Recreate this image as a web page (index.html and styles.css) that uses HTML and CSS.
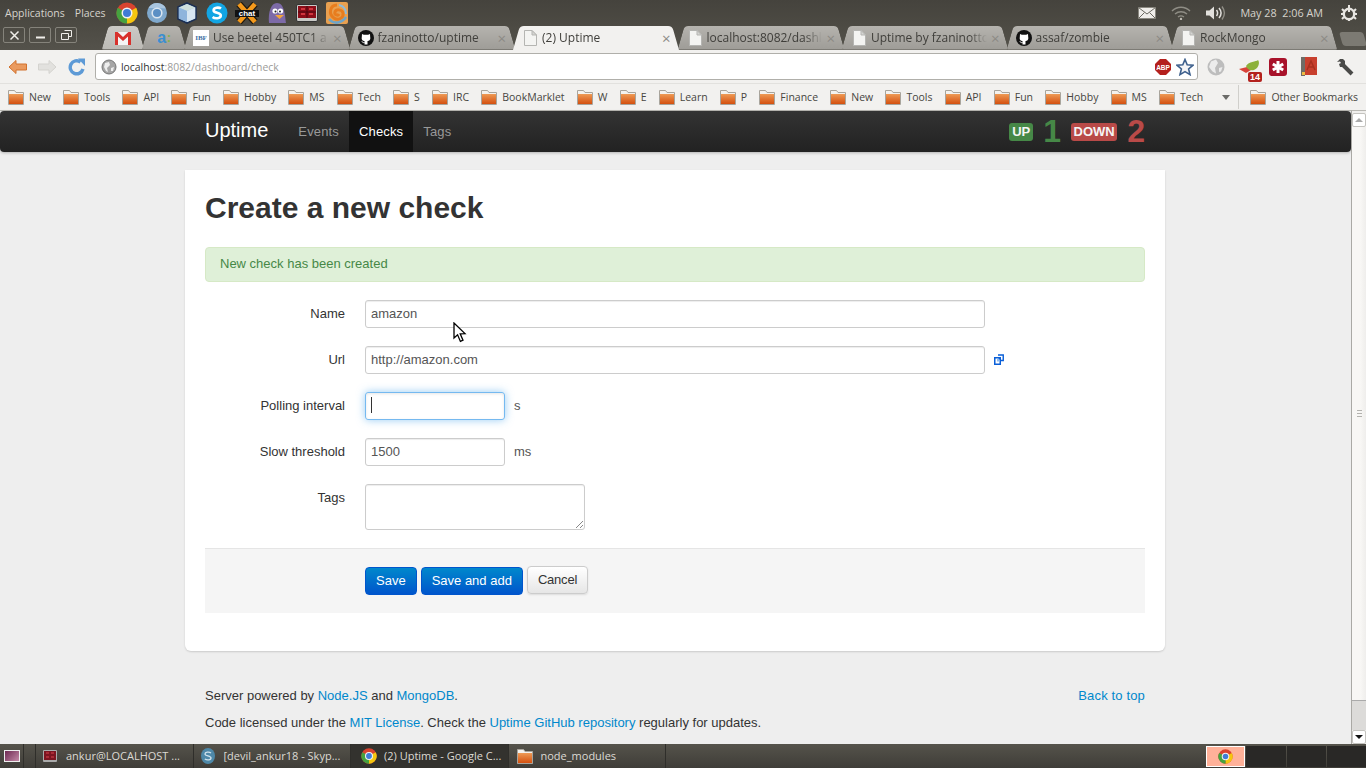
FILE: index.html
```html
<!DOCTYPE html>
<html lang="en">
<head>
    <meta charset="UTF-8">
    <title>(2) Uptime</title>
    <link rel="stylesheet" href="styles.css">
</head>
<body>

    <svg class="defs" width="0" height="0">
        <linearGradient id="folder-fill" x1="0" y1="0" x2="0" y2="1">
            <stop offset="0" stop-color="#ee9a55"/>
            <stop offset="1" stop-color="#d4500f"/>
        </linearGradient>
        <symbol id="chrome" viewBox="0 0 24 24">
            <circle cx="12" cy="12" r="11.5" fill="#d9432f"/>
            <path d="M12 12 L22 6.25 A11.5 11.5 0 0 1 12 23.5 Z" fill="#f4c60f"/>
            <path d="M12 12 L12 23.5 A11.5 11.5 0 0 1 2 6.25 Z" fill="#45a23f"/>
            <circle cx="12" cy="12" r="6" fill="#f2f2f2"/>
            <circle cx="12" cy="12" r="4.4" fill="#3f7cd6"/>
        </symbol>
        <symbol id="folder" viewBox="0 0 16 16">
            <path d="M.5 4 V1.5 H6.5 L8 3.5 H15.5 V15.5 H.5 Z" fill="#f4f2ee" stroke="#a8a49c"/>
            <rect x="1" y="5" width="14" height="10" fill="url(#folder-fill)"/>
        </symbol>
        <symbol id="doc" viewBox="0 0 16 16">
            <path d="M2.5 .5 H10 L14.5 5 V15.5 H2.5 Z" fill="#f4f4f2" stroke="#b5b5b2"/>
            <path d="M10 .5 V5 H14.5 Z" fill="#d5d5d2" stroke="#b5b5b2"/>
        </symbol>
        <symbol id="octocat" viewBox="0 0 16 16">
            <circle cx="8" cy="8" r="8" fill="#111"/>
            <path d="M4 4 L5.8 4.8 H10.2 L12 4 L12.2 7 C12.8 10 11 11 9.5 11 V14.5 H6.5 V11 C5 11 3.2 10 3.8 7 Z" fill="#fff"/>
            <path d="M6.5 12.5 C5 13 4.4 12 3.8 11.4" stroke="#fff" fill="none"/>
        </symbol>
    </svg>

    <div class="panel">
        <span class="panel-menu">Applications</span>
        <span class="panel-menu">Places</span>
        <div class="launchers">
            <svg class="launcher" width="22" height="22"><use href="#chrome"/></svg>
            <svg class="launcher" width="22" height="22" viewBox="0 0 22 22">
                <circle cx="11" cy="11" r="10" fill="#7fa8cc"/>
                <path d="M2.5 6 A10 10 0 0 1 20 6.5 L11 6 Z" fill="#a9c5de"/>
                <circle cx="11" cy="11" r="5.6" fill="#dbe6f0"/>
                <circle cx="11" cy="11" r="4" fill="#5b8fc4"/>
            </svg>
            <svg class="launcher" width="22" height="22" viewBox="0 0 22 22">
                <path d="M11 1 L20 5 V17 L11 21 L2 17 V5 Z" fill="#9cc3e6" stroke="#1c2f52" stroke-width="1.6"/>
                <path d="M2.8 5.4 L11 9 L19.2 5.4 L11 1.9 Z" fill="#cfe0dc"/>
                <path d="M11 9 V20 L19.2 16.4 V5.4 Z" fill="#d8e6f2"/>
                <path d="M2.8 5.4 L11 9 V20 L2.8 16.4 Z" fill="#8fb4dc"/>
            </svg>
            <svg class="launcher" width="22" height="22" viewBox="0 0 22 22">
                <circle cx="11" cy="11" r="10.5" fill="#12a5e3"/>
                <path d="M15 6.6 C13 5 7.5 5.2 7.6 8.4 C7.7 11.6 15 10 14.8 13.6 C14.6 16.6 9 17 6.6 15" fill="none" stroke="#fff" stroke-width="2.6"/>
            </svg>
            <svg class="launcher launcher-chat" width="24" height="22" viewBox="0 0 24 22">
                <path d="M4 2 L20 20 M20 2 L4 20" stroke="#201a10" stroke-width="7"/>
                <path d="M4 2 L20 20 M20 2 L4 20" stroke="#f59a1c" stroke-width="4.6"/>
                <rect x="0" y="8" width="24" height="7" fill="#111"/>
                <text x="12" y="14" class="chat-word">chat</text>
            </svg>
            <svg class="launcher" width="22" height="22" viewBox="0 0 22 22">
                <path d="M3 21 C2 10 5 1 11 1 C18 1 19 12 20 21 Z" fill="#7d6aa8"/>
                <circle cx="9" cy="9" r="2.6" fill="#fff"/>
                <circle cx="14.5" cy="9" r="2.6" fill="#fff"/>
                <circle cx="9.5" cy="9.5" r="1" fill="#222"/>
                <circle cx="14" cy="9.5" r="1" fill="#222"/>
                <path d="M9 13 H18 L13.5 17 Z" fill="#f2a53c"/>
            </svg>
            <svg class="launcher" width="22" height="22" viewBox="0 0 22 22">
                <rect x=".5" y="2.5" width="21" height="17" rx="1.5" fill="#c9c9c6" stroke="#333"/>
                <rect x="2" y="4" width="18" height="12" fill="#8c0d18"/>
                <path d="M5 7 H9 M13 7 H17 M5 12 H9 M13 12 H17" stroke="#e8434c" stroke-width="1.4"/>
                <path d="M11 4 V16 M2 10 H20" stroke="#4a0610"/>
            </svg>
            <svg class="launcher" width="22" height="22" viewBox="0 0 22 22">
                <rect x="0" y="0" width="22" height="22" rx="2" fill="#e8a050"/>
                <path d="M11 3 C4 3 2 12 8 16 C12 19 18 16 17 11 C16 7 10 7 9 10 C8 13 12 14 13 12" fill="none" stroke="#e87d1e" stroke-width="3"/>
                <path d="M3 17 C8 23 16 21 20 15" fill="none" stroke="#6ea4c8" stroke-width="2.6"/>
                <path d="M13 3 C18 4 20 8 20 12" fill="none" stroke="#8fbad8" stroke-width="2"/>
            </svg>
        </div>
        <div class="indicators">
            <svg width="18" height="12" viewBox="0 0 18 12">
                <rect x=".5" y=".5" width="17" height="11" fill="#efedea" stroke="#8a8880"/>
                <path d="M.5 .5 L9 7 L17.5 .5 M.5 11.5 L6.5 5.5 M17.5 11.5 L11.5 5.5" fill="none" stroke="#6b6961"/>
            </svg>
            <svg class="ind-wifi" width="20" height="14" viewBox="0 0 20 14">
                <path d="M1 5 C6 0 14 0 19 5 M4 8 C7.5 5 12.5 5 16 8 M7 11 C9 9.5 11 9.5 13 11" fill="none" stroke="#8f8d85" stroke-width="1.4"/>
                <circle cx="10" cy="13" r="1.2" fill="#bdbbb3"/>
            </svg>
            <svg class="ind-sound" width="20" height="16" viewBox="0 0 20 16">
                <path d="M0 5.5 H3.5 L8 1.5 V14.5 L3.5 10.5 H0 Z" fill="#e2e0dc"/>
                <path d="M10.5 5 C12 7 12 9 10.5 11 M13 3 C15.5 6 15.5 10 13 13" fill="none" stroke="#e2e0dc" stroke-width="1.5"/>
                <path d="M16 1.5 C19 5.5 19 10.5 16 14.5" fill="none" stroke="#8f8d85" stroke-width="1.4"/>
            </svg>
            <span class="clock">May 28&nbsp; 2:06 AM</span>
            <svg class="ind-gear" width="16" height="16" viewBox="0 0 16 16">
                <circle cx="8" cy="9" r="5.2" fill="none" stroke="#e8e6e2" stroke-width="2.4"/>
                <path d="M8 0 V7 M1 4 L3 6 M15 4 L13 6 M1 14 L3 12 M15 14 L13 12 M0 9 H2 M14 9 H16 M8 14 V16" stroke="#e8e6e2" stroke-width="2"/>
            </svg>
        </div>
    </div>

    <div class="tabstrip">
        <div class="win-buttons">
            <span class="win-btn"><svg width="11" height="11" viewBox="0 0 11 11"><path d="M1.5 1.5 L9.5 9.5 M9.5 1.5 L1.5 9.5" stroke="#f0eeea" stroke-width="1.5"/></svg></span>
            <span class="win-btn"><svg width="11" height="11" viewBox="0 0 11 11"><path d="M1 7.5 H10" stroke="#f0eeea" stroke-width="2"/></svg></span>
            <span class="win-btn"><svg width="11" height="11" viewBox="0 0 11 11"><path d="M3.5 .5 H10.5 V6.5 H7.5 M.5 3.5 H7.5 V9.5 H.5 Z" fill="none" stroke="#f0eeea"/></svg></span>
        </div>
        <div class="tabs">
            <div class="tab tab-pin tab-gmail">
                <svg width="16" height="13" viewBox="0 0 16 13"><rect width="16" height="13" fill="#f4f4f4"/><path d="M0 0 H2.6 L8 5 L13.4 0 H16 V13 H13 V4.5 L8 9 L3 4.5 V13 H0 Z" fill="#d8312c"/></svg>
            </div>
            <div class="tab tab-pin tab-a"><span class="a-mark">a</span><span class="a-dots">:</span></div>
            <div class="tab">
                <span class="ibf">IBF</span>
                <span class="tab-title">Use beetel 450TC1 a</span><span class="tab-x">×</span>
            </div>
            <div class="tab">
                <svg width="16" height="16"><use href="#octocat"/></svg>
                <span class="tab-title">fzaninotto/uptime</span><span class="tab-x">×</span>
            </div>
            <div class="tab tab-active">
                <svg width="16" height="16"><use href="#doc"/></svg>
                <span class="tab-title">(2) Uptime</span><span class="tab-x">×</span>
            </div>
            <div class="tab">
                <svg width="16" height="16"><use href="#doc"/></svg>
                <span class="tab-title">localhost:8082/dashl</span><span class="tab-x">×</span>
            </div>
            <div class="tab">
                <svg width="16" height="16"><use href="#doc"/></svg>
                <span class="tab-title">Uptime by fzaninotto</span><span class="tab-x">×</span>
            </div>
            <div class="tab">
                <svg width="16" height="16"><use href="#octocat"/></svg>
                <span class="tab-title">assaf/zombie</span><span class="tab-x">×</span>
            </div>
            <div class="tab">
                <svg width="16" height="16"><use href="#doc"/></svg>
                <span class="tab-title">RockMongo</span><span class="tab-x">×</span>
            </div>
            <div class="tab-new"></div>
        </div>
    </div>

    <div class="toolbar">
        <svg class="nav-icon" width="20" height="16" viewBox="0 0 20 16">
            <path d="M1 8 L8 1.5 V5 H18.5 V11 H8 V14.5 Z" fill="#ea9a5e" stroke="#d2722e"/>
        </svg>
        <svg class="nav-icon" width="20" height="16" viewBox="0 0 20 16">
            <path d="M19 8 L12 1.5 V5 H1.5 V11 H12 V14.5 Z" fill="#e2e1de" stroke="#d4d3cf"/>
        </svg>
        <svg class="nav-icon nav-reload" width="18" height="18" viewBox="0 0 18 18">
            <path d="M15 11 A6.5 6.5 0 1 1 12.5 4" fill="none" stroke="#5d9ad6" stroke-width="3.4"/>
            <path d="M10 .5 H17 V8 Z" fill="#5d9ad6"/>
        </svg>
        <div class="omnibox">
            <svg width="16" height="16" viewBox="0 0 16 16">
                <circle cx="8" cy="8" r="7" fill="#a6a6a6" stroke="#777"/>
                <path d="M4 4 L8 3 L9 6 L6 9 L7 13 L5 12 L3 8 Z M10 9 L13 8 L12 12 L10 12 Z" fill="#eee"/>
            </svg>
            <span class="url"><span class="url-host">localhost</span>:8082/dashboard/check</span>
            <svg class="abp" width="16" height="16" viewBox="0 0 16 16">
                <path d="M5 0 H11 L16 5 V11 L11 16 H5 L0 11 V5 Z" fill="#b4201d"/>
                <text x="8" y="10.5" class="abp-word">ABP</text>
            </svg>
            <svg width="18" height="18" viewBox="0 0 18 18">
                <path d="M9 1.5 L11.2 6.8 L17 7.2 L12.6 11 L14 16.6 L9 13.6 L4 16.6 L5.4 11 L1 7.2 L6.8 6.8 Z" fill="#f4f4f6" stroke="#3d5f8c" stroke-width="1.6"/>
            </svg>
        </div>
        <div class="ext-icons">
            <svg width="18" height="18" viewBox="0 0 18 18">
                <circle cx="9" cy="9" r="8.5" fill="#bdbdbd"/>
                <path d="M4 3.5 L9 1.5 L11 5 L8 10 L9 15.5 L5.5 13.5 L2 9 Z M12 10 L15.5 9 L14 13.5 L12 14 Z" fill="#ececec"/>
            </svg>
            <div class="ext-bird">
                <svg width="22" height="16" viewBox="0 0 22 16">
                    <path d="M0 10 L8 8 L12 11 L7 14 Z" fill="#d8443a"/>
                    <path d="M7 7 C10 2 17 3 19 1 C21 3 20 9 15 11 C11 12 8 10 7 7 Z" fill="#8cb13a"/>
                </svg>
                <span class="ext-badge">14</span>
            </div>
            <svg width="18" height="18" viewBox="0 0 18 18">
                <rect width="18" height="18" rx="3" fill="#a8122a"/>
                <path d="M9 3 V15 M3.8 6 L14.2 12 M14.2 6 L3.8 12" stroke="#fff" stroke-width="3"/>
            </svg>
            <svg class="ext-book" width="16" height="19" viewBox="0 0 16 19">
                <rect x="0" y="0" width="4" height="19" fill="#6f6c66"/>
                <rect x="4" y="0" width="12" height="18" fill="#c8402e"/>
                <path d="M6 13 L10 4 L14 13 M7.5 10 H12.5" fill="none" stroke="#a8301f" stroke-width="1.5"/>
                <rect x="1" y="15" width="3" height="3" fill="#eebb44"/>
            </svg>
            <svg class="ext-wrench" width="18" height="18" viewBox="0 0 18 18">
                <path d="M16 16 L7 7" stroke="#4a4a48" stroke-width="4"/>
                <path d="M1 4 L4 1 H7 L9 3 V7 L7 9 H4 L3 6 L5 5 L4 3.5 Z" fill="#4a4a48"/>
            </svg>
        </div>
    </div>

    <div class="bookmarks">
        <div class="bookmark-list">
            <span class="bookmark"><svg width="16" height="16"><use href="#folder"/></svg>New</span>
            <span class="bookmark"><svg width="16" height="16"><use href="#folder"/></svg>Tools</span>
            <span class="bookmark"><svg width="16" height="16"><use href="#folder"/></svg>API</span>
            <span class="bookmark"><svg width="16" height="16"><use href="#folder"/></svg>Fun</span>
            <span class="bookmark"><svg width="16" height="16"><use href="#folder"/></svg>Hobby</span>
            <span class="bookmark"><svg width="16" height="16"><use href="#folder"/></svg>MS</span>
            <span class="bookmark"><svg width="16" height="16"><use href="#folder"/></svg>Tech</span>
            <span class="bookmark"><svg width="16" height="16"><use href="#folder"/></svg>S</span>
            <span class="bookmark"><svg width="16" height="16"><use href="#folder"/></svg>IRC</span>
            <span class="bookmark"><svg width="16" height="16"><use href="#folder"/></svg>BookMarklet</span>
            <span class="bookmark"><svg width="16" height="16"><use href="#folder"/></svg>W</span>
            <span class="bookmark"><svg width="16" height="16"><use href="#folder"/></svg>E</span>
            <span class="bookmark"><svg width="16" height="16"><use href="#folder"/></svg>Learn</span>
            <span class="bookmark"><svg width="16" height="16"><use href="#folder"/></svg>P</span>
            <span class="bookmark"><svg width="16" height="16"><use href="#folder"/></svg>Finance</span>
            <span class="bookmark"><svg width="16" height="16"><use href="#folder"/></svg>New</span>
            <span class="bookmark"><svg width="16" height="16"><use href="#folder"/></svg>Tools</span>
            <span class="bookmark"><svg width="16" height="16"><use href="#folder"/></svg>API</span>
            <span class="bookmark"><svg width="16" height="16"><use href="#folder"/></svg>Fun</span>
            <span class="bookmark"><svg width="16" height="16"><use href="#folder"/></svg>Hobby</span>
            <span class="bookmark"><svg width="16" height="16"><use href="#folder"/></svg>MS</span>
            <span class="bookmark"><svg width="16" height="16"><use href="#folder"/></svg>Tech</span>
        </div>
        <span class="bookmark-more"></span>
        <span class="bookmark bookmark-other"><svg width="16" height="16"><use href="#folder"/></svg>Other Bookmarks</span>
    </div>

    <div class="viewport">
        <div class="page">
            <div class="navbar">
                <div class="container navbar-inner">
                    <a class="brand">Uptime</a>
                    <a class="nav-link">Events</a>
                    <a class="nav-link nav-active">Checks</a>
                    <a class="nav-link">Tags</a>
                    <div class="counts">
                        <span class="label label-up">UP</span>
                        <span class="count count-up">1</span>
                        <span class="label label-down">DOWN</span>
                        <span class="count count-down">2</span>
                    </div>
                </div>
            </div>

            <div class="card">
                <h1>Create a new check</h1>
                <div class="alert">New check has been created</div>
                <form class="check-form">
                    <div class="row">
                        <label>Name</label>
                        <div class="field"><div class="input input-wide">amazon</div></div>
                    </div>
                    <div class="row">
                        <label>Url</label>
                        <div class="field">
                            <div class="input input-wide">http://amazon.com</div>
                            <svg class="ext-link" width="10" height="11" viewBox="0 0 10 11">
                                <rect x=".75" y="3.75" width="5.5" height="6.5" fill="#fff" stroke="#0a5fd8" stroke-width="1.5"/>
                                <path d="M4 1 H9.25 V6.5 H7 M6.5 3.5 L3.5 6.5" fill="none" stroke="#0a5fd8" stroke-width="1.4"/>
                                <path d="M3 5 H5 V7.5 H3 Z" fill="#8fbcec"/>
                            </svg>
                        </div>
                    </div>
                    <div class="row">
                        <label>Polling interval</label>
                        <div class="field">
                            <div class="input input-small input-focus"><span class="caret"></span></div>
                            <span class="unit">s</span>
                        </div>
                    </div>
                    <div class="row">
                        <label>Slow threshold</label>
                        <div class="field">
                            <div class="input input-small">1500</div>
                            <span class="unit">ms</span>
                        </div>
                    </div>
                    <div class="row">
                        <label>Tags</label>
                        <div class="field">
                            <div class="input input-area">
                                <svg class="grip" width="9" height="9" viewBox="0 0 9 9"><path d="M1 8 L8 1 M5 8 L8 5" stroke="#888"/></svg>
                            </div>
                        </div>
                    </div>
                    <div class="form-actions">
                        <button type="button" class="btn btn-primary">Save</button>
                        <button type="button" class="btn btn-primary">Save and add</button>
                        <button type="button" class="btn btn-cancel">Cancel</button>
                    </div>
                </form>
            </div>

            <div class="container footer">
                <div class="footer-line">
                    <span>Server powered by <a>Node.JS</a> and <a>MongoDB</a>.</span>
                    <a class="back-top">Back to top</a>
                </div>
                <div class="footer-line">
                    <span>Code licensed under the <a>MIT License</a>. Check the <a>Uptime GitHub repository</a> regularly for updates.</span>
                </div>
            </div>
        </div>

        <div class="scrollbar">
            <span class="scroll-btn"><span class="arrow-up"></span></span>
            <span class="scroll-thumb">
                <span class="scroll-grip"></span>
            </span>
            <span class="scroll-trough"></span>
            <span class="scroll-btn"><span class="arrow-down"></span></span>
        </div>
    </div>

    <div class="taskbar">
        <span class="show-desktop"><span class="show-desktop-icon"></span></span>
        <div class="task">
            <svg width="16" height="16" viewBox="0 0 16 16"><rect x="1" y="2" width="14" height="12" rx="1" fill="#aaa"/><rect x="2" y="3" width="12" height="9" fill="#7c1420"/><path d="M4 5 H7 M9 5 H12 M4 9 H7 M9 9 H12" stroke="#d8434c"/></svg>
            <span>ankur@LOCALHOST ...</span>
        </div>
        <div class="task">
            <svg width="16" height="16" viewBox="0 0 16 16"><ellipse cx="8" cy="8" rx="7" ry="8" fill="#4e88a8"/><path d="M11 5 C9 3.5 5 4 5 6 C5 8.4 11 7.4 11 10 C11 12.2 7 12.4 4.8 11" fill="none" stroke="#cfe2ec" stroke-width="1.3"/></svg>
            <span>[devil_ankur18 - Skyp...</span>
        </div>
        <div class="task task-active">
            <svg width="16" height="16"><use href="#chrome"/></svg>
            <span>(2) Uptime - Google C...</span>
        </div>
        <div class="task task-last">
            <svg width="16" height="16"><use href="#folder"/></svg>
            <span>node_modules</span>
        </div>
        <div class="tray">
            <span class="tray-item tray-chrome"><svg width="15" height="15"><use href="#chrome"/></svg></span>
            <span class="tray-item"></span>
            <span class="tray-item"></span>
            <span class="tray-item"></span>
        </div>
    </div>

    <svg class="mouse" width="14" height="21" viewBox="0 0 14 21">
        <path d="M1 1 V16 L4.6 12.8 L7.4 19.4 L10 18.2 L7.2 11.8 L12 11.6 Z" fill="#fff" stroke="#000" stroke-width="1.3"/>
    </svg>

</body>
</html>
```

FILE: styles.css
```css
* {
    box-sizing: border-box;
}
html,
body {
    height: 100%;
    margin: 0;
}
body {
    display: flex;
    flex-direction: column;
    width: 1366px;
    height: 768px;
    overflow: hidden;
    position: relative;
    font-family: "Liberation Sans", Arial, sans-serif;
    font-size: 13px;
    line-height: 18px;
    color: #333;
}
svg {
    display: block;
    flex: none;
}
.defs {
    position: absolute;
}

/* desktop panel */
.panel {
    display: flex;
    align-items: center;
    height: 25px;
    padding-left: 5px;
    background: linear-gradient(#45433d, #4c4a43);
    color: #d6d3cc;
    font-family: "Open Sans", sans-serif;
    font-size: 10.5px;
}
.panel-menu {
    margin-right: 10px;
}
.launchers {
    display: flex;
    align-items: center;
    gap: 8px;
}
.launcher-chat {
    margin: 0 -1px;
}
.chat-word {
    font-family: "Liberation Sans", sans-serif;
    font-size: 8px;
    font-weight: bold;
    fill: #fff;
    text-anchor: middle;
}
.indicators {
    display: flex;
    align-items: center;
    margin-left: auto;
    padding-right: 9px;
}
.ind-wifi {
    margin-left: 15px;
}
.ind-sound {
    margin-left: 15px;
}
.clock {
    margin-left: 14px;
    font-size: 10.8px;
}
.ind-gear {
    margin-left: 18px;
}

/* chrome tabs */
.tabstrip {
    display: flex;
    height: 25px;
    background: linear-gradient(#4c4a43, #54524b);
}
.win-buttons {
    display: flex;
    gap: 4px;
    flex: none;
    width: 103px;
    padding: 2px 0 0 3px;
}
.win-btn {
    display: flex;
    align-items: center;
    justify-content: center;
    width: 22px;
    height: 16px;
    border: 1px solid #85837b;
    border-radius: 2px;
}
.tabs {
    display: flex;
    flex: 1;
    min-width: 0;
}
.tab {
    display: flex;
    align-items: center;
    flex: none;
    position: relative;
    width: 164.5px;
    height: 24px;
    margin-top: 1px;
    padding: 0 8px;
    gap: 4px;
    font-family: "Open Sans", sans-serif;
    font-size: 12px;
    color: #3f3e3a;
    z-index: 0;
}
.tab::before,
.tab::after {
    content: "";
    position: absolute;
    top: 0;
    bottom: 0;
    width: 55%;
    z-index: -1;
    background: linear-gradient(#b5b3ae, #9f9d98);
    border-bottom: 1px solid #7d7b75;
}
.tab::before {
    left: 2px;
    transform: skewX(-16deg);
    border-radius: 4px 0 0 2px;
}
.tab::after {
    right: 2px;
    transform: skewX(16deg);
    border-radius: 0 4px 2px 0;
}
.tab-active {
    z-index: 1;
}
.tab-active::before,
.tab-active::after {
    bottom: -3px;
    background: #f2f1ef;
    border-bottom: 0;
}
.tab-pin {
    justify-content: center;
    padding: 0;
}
.tab-gmail {
    width: 40px;
}
.tab-gmail::before,
.tab-gmail::after {
    background: linear-gradient(#cbc9c5, #bdbbb6);
}
.tab-a {
    width: 42px;
    gap: 1px;
}
.a-mark {
    font-family: "Liberation Sans", sans-serif;
    font-size: 16px;
    font-weight: bold;
    color: #3a8fd0;
}
.a-dots {
    font-weight: bold;
    color: #7fb24a;
}
.ibf {
    display: flex;
    align-items: center;
    justify-content: center;
    width: 16px;
    height: 16px;
    flex: none;
    background: #fff;
    font-family: "Liberation Serif", serif;
    font-size: 7px;
    font-weight: bold;
    color: #3d6ea3;
}
.tab-title {
    flex: 1;
    min-width: 0;
    overflow: hidden;
    white-space: nowrap;
    -webkit-mask-image: linear-gradient(90deg, #000 85%, transparent);
    mask-image: linear-gradient(90deg, #000 85%, transparent);
}
.tab-x {
    color: #8c8a85;
    font-size: 15px;
    line-height: 1;
}
.tab-new {
    flex: none;
    width: 24px;
    height: 14px;
    margin: 7px 0 0 4px;
    background: #7c7a73;
    border-radius: 3px;
    transform: skewX(16deg);
}

/* chrome toolbar */
.toolbar {
    display: flex;
    align-items: center;
    position: relative;
    height: 34px;
    padding-left: 8px;
    background: #f2f1ef;
    border-bottom: 1px solid #e2e1de;
}
.nav-icon {
    margin-right: 9px;
}
.nav-reload {
    margin-left: 2px;
}
.omnibox {
    display: flex;
    align-items: center;
    position: relative;
    z-index: 2;
    width: 1103px;
    height: 27px;
    padding: 0 3px 0 5px;
    background: #fff;
    border: 1px solid #b0afaa;
    border-radius: 3px;
}
.url {
    flex: 1;
    margin-left: 4px;
    font-family: "Open Sans", sans-serif;
    font-size: 10.4px;
    color: #9c9c9a;
}
.url-host {
    color: #333;
}
.abp {
    margin-right: 5px;
}
.abp-word {
    font-family: "Liberation Sans", sans-serif;
    font-size: 6.5px;
    font-weight: bold;
    fill: #fff;
    text-anchor: middle;
}
.ext-icons {
    display: flex;
    align-items: center;
    margin-left: 9px;
}
.ext-bird {
    position: relative;
    width: 22px;
    height: 16px;
    margin: 0 8px 0 14px;
}
.ext-badge {
    position: absolute;
    right: -1px;
    bottom: -7px;
    padding: 0 2px;
    background: #b3211d;
    border-radius: 2px;
    color: #fff;
    font-size: 9px;
    font-weight: bold;
    line-height: 10px;
}
.ext-book {
    margin-left: 14px;
}
.ext-wrench {
    margin-left: 19px;
}

/* bookmarks bar */
.bookmarks {
    display: flex;
    align-items: center;
    height: 26px;
    padding-left: 8px;
    background: #f2f1ef;
    font-family: "Open Sans", sans-serif;
    font-size: 10.5px;
    color: #47463f;
}
.bookmark-list {
    display: flex;
    gap: 12.2px;
}
.bookmark {
    display: flex;
    align-items: center;
    gap: 5px;
    white-space: nowrap;
}
.bookmark-more {
    width: 0;
    height: 0;
    margin-left: 19px;
    border: 4px solid transparent;
    border-top: 5px solid #6b6b68;
    border-bottom: 0;
}
.bookmark-other {
    height: 24px;
    margin-left: auto;
    padding: 0 8px 0 11px;
    border-left: 1px solid #d0cfcb;
}

/* page */
.viewport {
    display: flex;
    flex: 1;
    min-height: 0;
}
.page {
    flex: 1;
    min-width: 0;
    background: #eee;
    border-top: 1px solid #b9b8b3;
}
.container {
    width: 940px;
    margin-left: 205px;
}
.navbar {
    height: 41px;
    background: linear-gradient(#333, #222);
    border-radius: 4px;
    box-shadow: 0 1px 3px rgba(0, 0, 0, .25);
}
.navbar-inner {
    display: flex;
    align-items: stretch;
    height: 41px;
}
.brand {
    margin-right: 20px;
    color: #fff;
    font-size: 20px;
    font-weight: 200;
    line-height: 38px;
}
.nav-link {
    padding: 0 10px;
    color: #999;
    line-height: 41px;
    letter-spacing: .15px;
}
.nav-active {
    background: #111;
    color: #fff;
}
.counts {
    display: flex;
    align-items: center;
    margin-left: auto;
}
.label {
    padding: 0 3px;
    border-radius: 3px;
    color: #f5f5f5;
    font-size: 13px;
    font-weight: bold;
    line-height: 18px;
}
.label-up {
    background: #468847;
}
.label-down {
    padding: 0 2.5px;
    background: #b94a48;
}
.count {
    font-size: 32px;
    font-weight: bold;
    line-height: 41px;
}
.count-up {
    margin: 0 10px;
    color: #468847;
}
.count-down {
    margin-left: 10px;
    color: #b94a48;
}
.card {
    width: 980px;
    margin: 18px 0 0 185px;
    padding: 20px 20px 38px;
    background: #fff;
    border-radius: 0 0 6px 6px;
    box-shadow: 0 1px 2px rgba(0, 0, 0, .15);
}
h1 {
    margin: 0 0 21px;
    font-size: 30px;
    line-height: 36px;
    color: #333;
}
.alert {
    height: 35px;
    margin-bottom: 18px;
    padding: 7px 14px;
    background: #dff0d8;
    border: 1px solid #d6e9c6;
    border-radius: 4px;
    color: #468847;
}
.row {
    display: flex;
    margin-bottom: 18px;
}
.row label {
    width: 140px;
    padding-top: 5px;
    text-align: right;
}
.field {
    display: flex;
    align-items: center;
    margin-left: 20px;
    gap: 8px;
}
.input {
    height: 28px;
    padding: 4px 5px;
    border: 1px solid #ccc;
    border-radius: 3px;
    color: #555;
    box-shadow: inset 0 1px 1px rgba(0, 0, 0, .075);
}
.input-wide {
    width: 620px;
}
.input-small {
    width: 140px;
}
.input-focus {
    border-color: rgba(82, 168, 236, .8);
    box-shadow: inset 0 1px 3px rgba(0, 0, 0, .1), 0 0 8px rgba(82, 168, 236, .6);
}
.caret {
    display: block;
    width: 1px;
    height: 16px;
    background: #333;
}
.ext-link {
    margin: 0 0 2px 1px;
}
.input-area {
    position: relative;
    width: 220px;
    height: 46px;
}
.grip {
    position: absolute;
    right: 0;
    bottom: 0;
}
.unit {
    margin-left: 1px;
    color: #555;
}
.form-actions {
    display: flex;
    align-items: flex-start;
    gap: 4px;
    height: 65px;
    padding: 18px 0 0 160px;
    background: #f5f5f5;
    border-top: 1px solid #e5e5e5;
}
.btn {
    height: 28px;
    padding: 0 10px;
    border-radius: 4px;
    font-family: inherit;
    font-size: 13px;
    line-height: 18px;
}
.btn-primary {
    background: linear-gradient(#0088cc, #0055cc);
    border: 1px solid #0055cc;
    color: #fff;
}
.btn-cancel {
    margin-top: -1px;
    background: linear-gradient(#fff, #e6e6e6);
    border: 1px solid #ccc;
    color: #333;
    letter-spacing: -.2px;
    box-shadow: 0 1px 2px rgba(0, 0, 0, .1);
}
.footer {
    padding-top: 36px;
}
.footer-line {
    display: flex;
    justify-content: space-between;
    margin-bottom: 9px;
}
.footer a {
    color: #0088cc;
}
.footer .back-top {
    letter-spacing: .15px;
}

/* scrollbar */
.scrollbar {
    display: flex;
    flex-direction: column;
    flex: none;
    width: 15px;
    padding-top: 2px;
    background: #f0efed;
    border-left: 1px solid #aaa9a5;
    border-top: 1px solid #b9b8b3;
}
.scroll-btn {
    display: flex;
    align-items: center;
    justify-content: center;
    flex: none;
    height: 14px;
    background: #fff;
    border: 1px solid #c4c3bf;
    border-radius: 2px;
}
.scroll-thumb {
    display: flex;
    align-items: center;
    justify-content: center;
    flex: 1;
    background: linear-gradient(90deg, #f8f7f5 60%, #efeeec);
}
.scroll-grip {
    width: 5px;
    height: 7px;
    background: repeating-linear-gradient(#b3b2ae 0 1px, transparent 1px 3px);
}
.scroll-trough {
    flex: none;
    height: 30px;
    background: #dcdbd9;
    border-top: 1px solid #aaa;
}
.arrow-up {
    border: 4px solid transparent;
    border-bottom: 4px solid #aaa;
    border-top: 0;
}
.arrow-down {
    border: 4px solid transparent;
    border-top: 4px solid #111;
    border-bottom: 0;
}

/* bottom taskbar */
.taskbar {
    display: flex;
    align-items: center;
    height: 24px;
    background: linear-gradient(#55534b, #3f3d38);
    color: #dcdad4;
    font-family: "Open Sans", sans-serif;
    font-size: 11px;
}
.show-desktop {
    display: flex;
    align-items: center;
    justify-content: center;
    width: 24px;
    height: 24px;
    margin-right: 11px;
    border-right: 1px solid #2f2e2a;
}
.show-desktop-icon {
    width: 16px;
    height: 12px;
    background: linear-gradient(135deg, #6e2a52, #c58aa8);
    border: 1px solid #eee;
}
.task {
    display: flex;
    align-items: center;
    flex: none;
    gap: 8px;
    width: 157.5px;
    height: 24px;
    padding-left: 6px;
    border-left: 1px solid #2f2e2a;
    white-space: nowrap;
}
.task-active {
    gap: 7px;
    padding-left: 10px;
    background: #33322e;
}
.task-last {
    flex: 1;
    padding-left: 8px;
    border-right: 1px solid #2f2e2a;
}
.tray {
    display: flex;
    flex: none;
    gap: 1px;
    height: 24px;
    margin-left: 540px;
    padding: 2px 0 1px;
}
.tray-item {
    display: flex;
    align-items: center;
    justify-content: center;
    width: 39.25px;
    background: #292826;
}
.tray-chrome {
    background: #ffb199;
    border: 1px solid #fff;
}

/* mouse pointer */
.mouse {
    position: absolute;
    left: 453px;
    top: 322px;
}
```
